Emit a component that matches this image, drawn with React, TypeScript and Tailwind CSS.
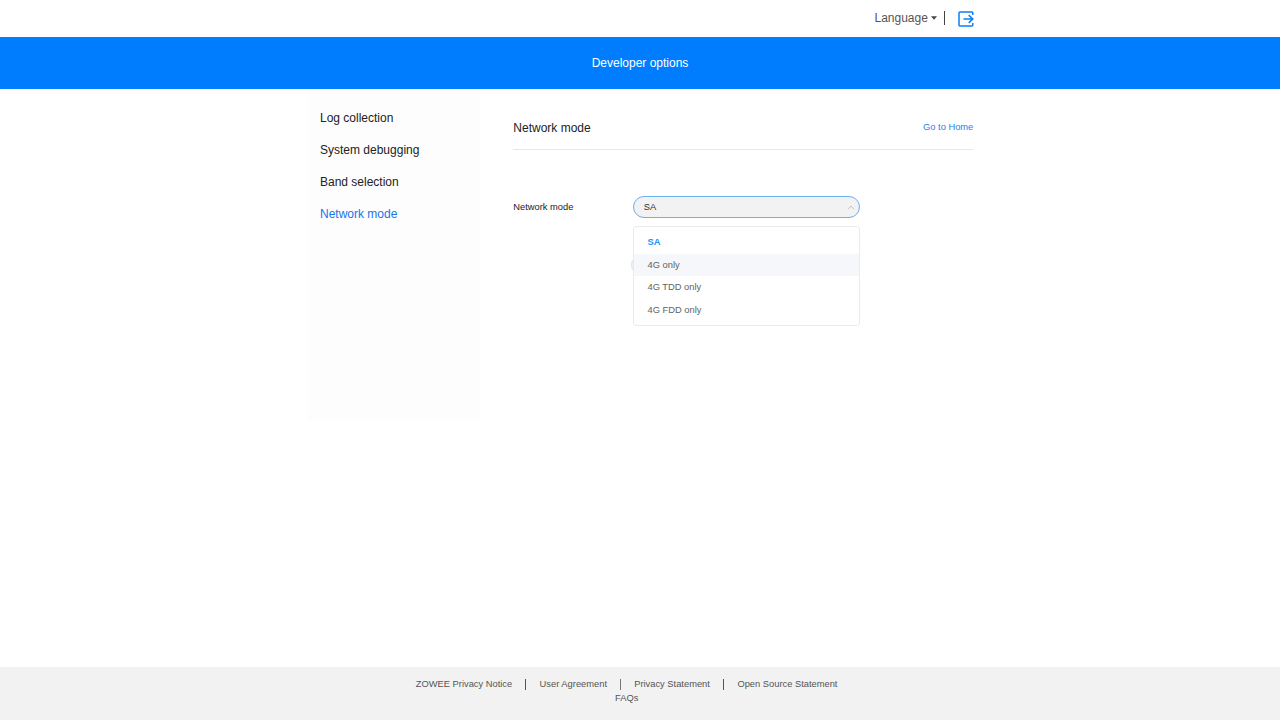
const menuItems = ["Log collection", "System debugging", "Band selection", "Network mode"];

const networkModes = ["SA", "4G only", "4G TDD only", "4G FDD only"];

function LogoutIcon() {
  return (
    <svg width="16" height="16" viewBox="0 0 16 16" fill="none" stroke="#0a80f5" strokeWidth="1.5">
      <path d="M14.8 4V2a1 1 0 0 0-1-1H2a1 1 0 0 0-1 1v12a1 1 0 0 0 1 1h11.8a1 1 0 0 0 1-1v-2" />
      <path d="M5.5 8h9.3M10.7 4.1L14.8 8l-4.1 3.9" />
    </svg>
  );
}

function TopBar() {
  return (
    <header className="flex h-[37px] shrink-0 items-center pl-[874.5px] text-[12px] text-[#555555]">
      <button className="flex items-center pb-[2px] leading-[18px]">
        Language
        <svg className="ml-[3px]" width="6" height="4" viewBox="0 0 6 4">
          <path d="M0 0.2h6L3 3.8z" fill="#444444" />
        </svg>
      </button>
      <span className="mb-px ml-[7px] h-[14px] w-px bg-[#444444]" />
      <button className="ml-[13px]">
        <LogoutIcon />
      </button>
    </header>
  );
}

function Sidebar({ active }: { active: string }) {
  return (
    <nav className="h-[332px] w-[172px] bg-[#fdfdfd] pt-[13px] pl-3 text-[12px]">
      {menuItems.map((item) => (
        <a
          key={item}
          className={`block h-8 leading-8 ${item === active ? "text-[#1a73e8]" : "text-[#222222]"}`}
        >
          {item}
        </a>
      ))}
    </nav>
  );
}

function ModeSelect({ value, hovered }: { value: string; hovered: string }) {
  return (
    <div className="relative w-[227px]">
      <div className="flex h-[22px] items-center justify-between rounded-full border border-[#6ab0f3] bg-[#f2f2f2] pr-1 pl-[10px] text-[#333333]">
        <span className="pt-[2px]">{value}</span>
        <svg width="8" height="5" viewBox="0 0 8 5" fill="none" stroke="#b8bbc2" strokeWidth="0.9">
          <path d="M1 4.2L4 1l3 3.2" />
        </svg>
      </div>
      <ul className="absolute top-[30px] left-0 z-10 h-[100px] w-full rounded-[3px] border border-[#e9ebf0] bg-white pt-1">
        {networkModes.map((mode) => (
          <li
            key={mode}
            className={`h-[22.67px] pl-[13.7px] leading-[22.67px] ${
              mode === value ? "font-bold text-[#2492f5]" : "text-[#606266]"
            } ${mode === hovered ? "bg-[#f5f7fa]" : ""}`}
          >
            {mode}
          </li>
        ))}
      </ul>
    </div>
  );
}

function NetworkModePanel() {
  return (
    <main className="ml-[33.3px] w-[460px] text-[9.33px]">
      <div className="flex h-[61px] items-center justify-between border-b border-[#e8e8e8] pt-[18px]">
        <h1 className="text-[12px] text-[#222222]">Network mode</h1>
        <a className="text-[#2681f0]">Go to Home</a>
      </div>
      <div className="mt-[46px] flex items-center">
        <label className="w-[119.5px] pt-[2px] text-[#222222]">Network mode</label>
        <ModeSelect value="SA" hovered="4G only" />
      </div>
      <div className="mt-[37px] ml-[117.5px] h-5 w-20 rounded-full border border-[#dfe1e5] bg-[#f2f2f2]" />
    </main>
  );
}

function Footer() {
  return (
    <footer className="h-[53px] shrink-0 bg-[#f2f2f2] pt-[10px] text-[9.33px] leading-[14px] text-[#555555]">
      <div className="flex h-[14px] items-center pl-[415.8px]">
        <a>ZOWEE Privacy Notice</a>
        <span className="mr-[13.6px] ml-[12.8px] h-[11px] w-px bg-[#555555]" />
        <a>User Agreement</a>
        <span className="mr-[13px] ml-[13.2px] h-[11px] w-px bg-[#777777]" />
        <a>Privacy Statement</a>
        <span className="mr-[13.4px] ml-[13.1px] h-[11px] w-px bg-[#555555]" />
        <a>Open Source Statement</a>
      </div>
      <div className="pl-[615px]">
        <a>FAQs</a>
      </div>
    </footer>
  );
}

export default function App() {
  return (
    <div className="flex h-screen flex-col overflow-hidden bg-white font-['Liberation_Sans',Arial,sans-serif]">
      <TopBar />
      <div className="flex h-[52px] shrink-0 items-center justify-center bg-[#007dff] text-[12px] text-white">
        Developer options
      </div>
      <div className="flex flex-1 pl-[308px]">
        <Sidebar active="Network mode" />
        <NetworkModePanel />
      </div>
      <Footer />
    </div>
  );
}
